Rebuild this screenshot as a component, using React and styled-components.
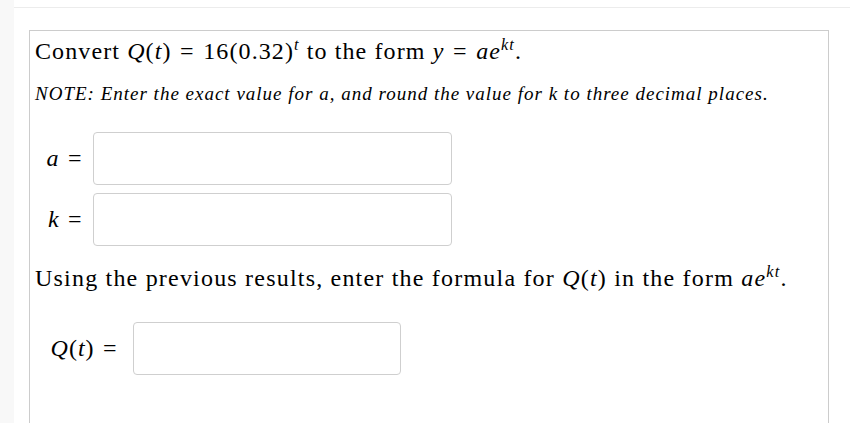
import React from "react";
import styled, { createGlobalStyle } from "styled-components";

const GlobalStyle = createGlobalStyle`
  html, body {
    margin: 0;
    padding: 0;
    background: #ffffff;
    overflow: hidden;
  }
  body {
    font-family: "Liberation Serif", "DejaVu Serif", serif;
    color: #000;
  }
`;

const Page = styled("div")`
  display: flex;
  height: 423px;
`;

const Sidebar = styled("div")`
  width: 14px;
  background: #f8f8f8;
  flex-shrink: 0;
`;

const Main = styled("div")`
  flex: 1;
  padding-top: 7px;
  display: flex;
  flex-direction: column;
`;

const Content = styled("div")`
  flex: 1;
  border-top: 1px solid #ececec;
  padding: 22px 21px 0 15px;
  display: flex;
`;

const Problem = styled("div")`
  flex: 1;
  border: 1px solid #cccccc;
  border-bottom: none;
  padding: 4px 5px 0 5px;
`;

const Lead = styled("p")`
  margin: 0;
  font-size: 24px;
  line-height: 32px;
  letter-spacing: 1.1px;
  white-space: nowrap;
`;

const Note = styled("p")`
  margin: 16px 0 0;
  font-size: 19px;
  letter-spacing: 1px;
  font-style: italic;
  white-space: nowrap;
`;

const M = styled("span")`
  font-style: italic;
`;

const Eq = styled("span")`
  margin: 0 0.06em;
`;

const Sup = styled("sup")`
  font-size: 0.68em;
  line-height: 0;
  vertical-align: 0.55em;
  font-style: italic;
`;

const Fields = styled("div")`
  margin-top: 27px;
  display: flex;
  flex-direction: column;
  gap: 8px;
`;

const Row = styled("div")`
  display: flex;
  align-items: center;
`;

const Label = styled("span")`
  font-size: 24px;
  width: ${(p) => p.$width}px;
  text-align: right;
  padding-right: ${(p) => p.$gap}px;
  box-sizing: border-box;
  white-space: nowrap;
  letter-spacing: 1px;
`;

const Input = styled("input")`
  width: ${(p) => p.$width}px;
  height: 53px;
  box-sizing: border-box;
  border: 1px solid #cfcfcf;
  border-radius: 4px;
  background: #fff;
  font-size: 18px;
  padding: 0 10px;
  outline: none;
`;

const Follow = styled("p")`
  margin: 19px 0 0;
  font-size: 24px;
  letter-spacing: 1.2px;
  white-space: nowrap;
`;

const FinalRow = styled(Row)`
  margin-top: 30px;
`;

export default function App() {
  return (
    <>
      <GlobalStyle />
      <Page>
        <Sidebar />
        <Main>
          <Content>
            <Problem>
              <Lead>
                Convert <M>Q</M>(<M>t</M>) <Eq>=</Eq> 16(0.32)<Sup>t</Sup> to
                the form <M>y</M> <Eq>=</Eq> <M>ae</M>
                <Sup>kt</Sup>.
              </Lead>
              <Note>
                NOTE: Enter the exact value for a, and round the value for k to
                three decimal places.
              </Note>
              <Fields>
                <Row>
                  <Label $width={58} $gap={9}>
                    <M>a</M> <Eq>=</Eq>
                  </Label>
                  <Input $width={359} />
                </Row>
                <Row>
                  <Label $width={58} $gap={9}>
                    <M>k</M> <Eq>=</Eq>
                  </Label>
                  <Input $width={359} />
                </Row>
              </Fields>
              <Follow>
                Using the previous results, enter the formula for <M>Q</M>(
                <M>t</M>) in the form <M>ae</M>
                <Sup>kt</Sup>.
              </Follow>
              <FinalRow>
                <Label $width={98} $gap={14}>
                  <M>Q</M>(<M>t</M>) <Eq>=</Eq>
                </Label>
                <Input $width={268} />
              </FinalRow>
            </Problem>
          </Content>
        </Main>
      </Page>
    </>
  );
}
